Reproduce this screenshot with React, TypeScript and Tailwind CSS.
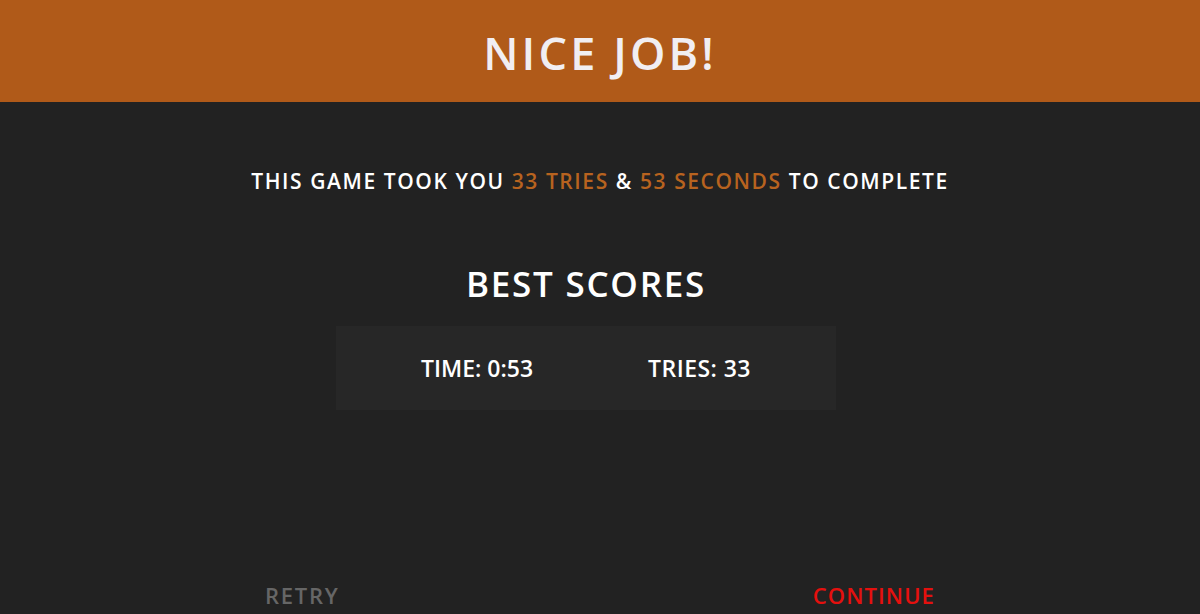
import * as React from "react";

const font = { fontFamily: '"Open Sans", "DejaVu Sans", sans-serif' };

export default function App() {
  return (
    <div className="flex min-h-[614px] w-full flex-col bg-[#222222] text-[#f4f2f4]" style={font}>
      <header className="flex h-[102px] items-center justify-center bg-[#b05a19] pt-[3px]">
        <h1 className="text-[45px] font-semibold tracking-[0.07em] text-[#f1eef2]">NICE JOB!</h1>
      </header>

      <main className="flex flex-1 flex-col items-center">
        <p className="mt-[64px] text-[21px] font-semibold tracking-[0.075em] text-white">
          THIS GAME TOOK YOU <span className="text-[#b8631f]">33 TRIES</span> &amp;{" "}
          <span className="text-[#b8631f]">53 SECONDS</span> TO COMPLETE
        </p>

        {/* best scores block sits slightly left of centre */}
        <section className="mr-[28px] flex flex-col items-center">
          <h2 className="mt-[60px] text-[35px] font-semibold tracking-[0.05em] text-white">BEST SCORES</h2>

          <div className="mt-[16px] flex h-[84px] w-[500px] items-center justify-center gap-[115px] bg-[#272727]">
            <span className="text-[23px] font-semibold text-white">TIME: 0:53</span>
            <span className="text-[23px] font-semibold tracking-[0.02em] text-white">TRIES: 33</span>
          </div>
        </section>

        <div className="mt-auto flex w-full justify-between px-[265px] pb-[2px]">
          <button className="text-[22px] font-semibold tracking-[0.08em] text-[#666666]">RETRY</button>
          <button className="text-[22px] font-semibold tracking-[0.05em] text-[#e5100e]">CONTINUE</button>
        </div>
      </main>
    </div>
  );
}
